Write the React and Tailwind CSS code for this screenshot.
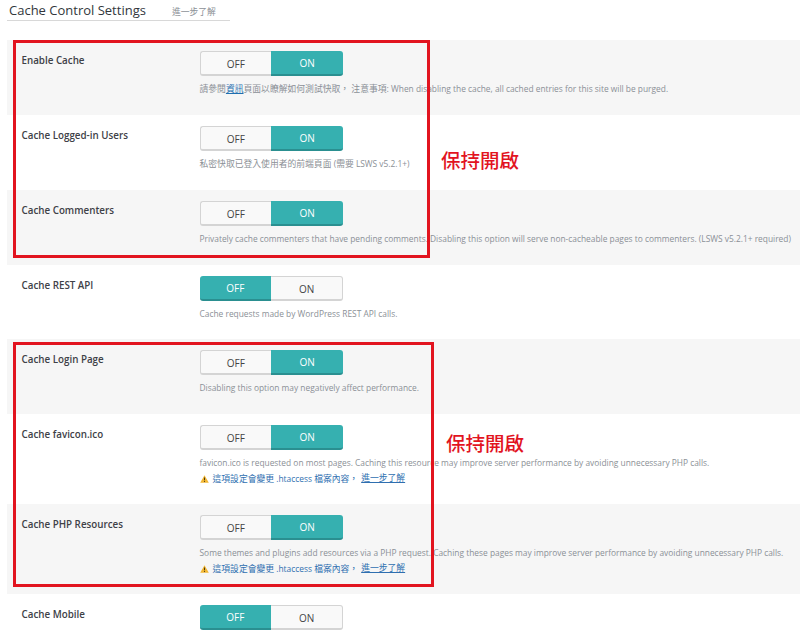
const CJK = "font-['Open_Sans','Noto_Sans_CJK_TC',sans-serif]";

function Toggle({ on }) {
  const active = "bg-[#36b0b0] text-white border-b-2 border-b-[#2a8f90]";
  const idle = "bg-[#f9f9f9] text-[#444] border border-[#d4d4d4] border-b-2";
  return (
    <div className="flex h-[25px] w-[143.5px] text-[10px] leading-[24px] text-center">
      <div className={`w-[71.75px] rounded-l-[3px] ${on ? idle + " border-r-0" : active}`}>OFF</div>
      <div className={`w-[71.75px] rounded-r-[3px] ${on ? active : idle + " border-l-0"}`}>ON</div>
    </div>
  );
}

function Z({ children, className = "" }) {
  return <span className={`text-[8.8px] ${className}`}>{children}</span>;
}

function Warn() {
  return (
    <div className="flex items-center h-[15px] text-[8.4px] leading-[15px] text-[#2f6fb0]">
      <svg width="9" height="8" viewBox="0 0 9 8" className="mr-[4px] shrink-0">
        <path d="M4.5 0.3 L8.8 7.7 L0.2 7.7 Z" fill="#f2b632" />
        <path d="M4.5 2.5 V5.2 M4.5 5.9 V6.9" stroke="#4a3a10" strokeWidth="1" />
      </svg>
      <span><Z>這項設定會變更</Z> .htaccess <Z>檔案內容，</Z></span>
      <Z className="ml-[3px] underline">進一步了解</Z>
    </div>
  );
}

function Row({ title, on, gray, h, desc, warn }) {
  return (
    <div className={`flex pl-[14.5px] pt-[11px] ${h} ${gray ? "bg-[#f6f6f6]" : "bg-white"}`}>
      <div className="w-[178px] shrink-0 pt-[1px] text-[9.8px] leading-[18px] font-semibold text-[#3e4147]">{title}</div>
      <div>
        <Toggle on={on} />
        <div className="mt-[5px] h-[16px] text-[8.4px] leading-[16px] text-[#8b9096] whitespace-nowrap">{desc}</div>
        {warn && <Warn />}
      </div>
    </div>
  );
}

function RedBox({ className }) {
  return <div className={`absolute border-[3px] border-[#e2141f] pointer-events-none ${className}`} />;
}

function Note({ className }) {
  return <div className={`absolute text-[19.5px] leading-[24px] font-medium text-[#e2141f] ${className}`}>保持開啟</div>;
}

export default function App() {
  return (
    <div className={`relative w-[800px] h-[632px] overflow-hidden bg-white ${CJK}`}>
      <div className="ml-[7px] w-[223px] h-[21px] flex items-baseline border-b border-[#d8d8d8] pl-[2px]">
        <span className="text-[13px] leading-[20px] font-medium text-[#32373c]">Cache Control Settings</span>
        <span className="ml-[26px] text-[8.8px] text-[#8b9096]">進一步了解</span>
      </div>
      <div className="ml-[7px] mt-[19px]">
        <Row gray h="h-[75px]" on title="Enable Cache" desc={<><Z>請參閱<span className="text-[#1f6fb0] underline">資訊</span>頁面以瞭解如何測試快取， 注意事項:</Z> When disabling the cache, all cached entries for this site will be purged.</>} />
        <Row h="h-[75px]" on title="Cache Logged-in Users" desc={<><Z>私密快取已登入使用者的前端頁面</Z> (<Z>需要</Z> LSWS v5.2.1+)</>} />
        <Row gray h="h-[75px]" on title="Cache Commenters" desc="Privately cache commenters that have pending comments. Disabling this option will serve non-cacheable pages to commenters. (LSWS v5.2.1+ required)" />
        <Row h="h-[74px]" on={false} title="Cache REST API" desc="Cache requests made by WordPress REST API calls." />
        <Row gray h="h-[75px]" on title="Cache Login Page" desc="Disabling this option may negatively affect performance." />
        <Row h="h-[90px]" on warn title="Cache favicon.ico" desc="favicon.ico is requested on most pages. Caching this resource may improve server performance by avoiding unnecessary PHP calls." />
        <Row gray h="h-[90px]" on warn title="Cache PHP Resources" desc="Some themes and plugins add resources via a PHP request. Caching these pages may improve server performance by avoiding unnecessary PHP calls." />
        <Row h="h-[60px]" on={false} title="Cache Mobile" desc="" />
      </div>
      <RedBox className="left-[13px] top-[40px] w-[417px] h-[218px]" />
      <RedBox className="left-[13px] top-[342px] w-[421px] h-[245px]" />
      <Note className="left-[441px] top-[149px]" />
      <Note className="left-[446px] top-[432px]" />
    </div>
  );
}
